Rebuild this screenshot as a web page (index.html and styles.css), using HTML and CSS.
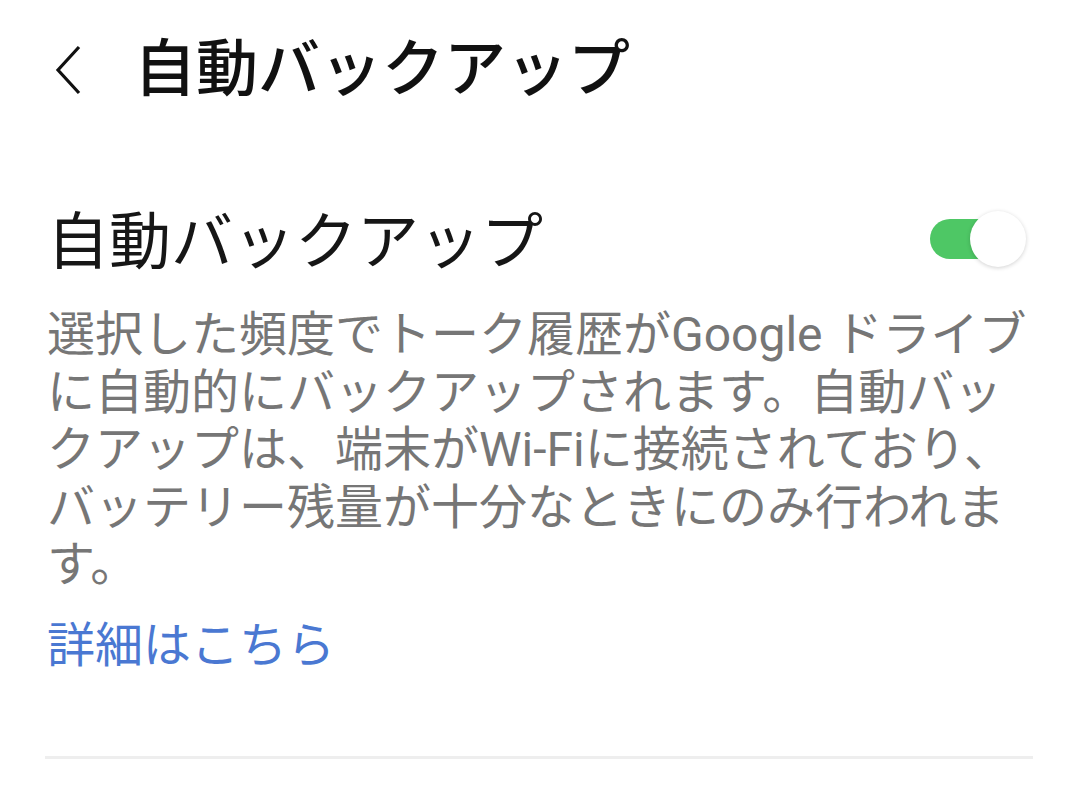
FILE: index.html
```html
<!DOCTYPE html>
<html lang="ja">
<head>
    <meta charset="UTF-8">
    <meta name="viewport" content="width=device-width, initial-scale=1.0">
    <title>自動バックアップ</title>
    <link rel="stylesheet" href="styles.css">
</head>
<body>
    <header class="top-bar">
        <button class="back-button" type="button" aria-label="戻る">
            <svg width="30" height="52" viewBox="0 0 30 52">
                <polyline points="25,3 4,26 25,49" fill="none" stroke="#111" stroke-width="3.2"/>
            </svg>
        </button>
        <h1 class="page-title">自動バックアップ</h1>
    </header>

    <section class="setting">
        <div class="setting-row">
            <h2 class="setting-title">自動バックアップ</h2>
            <div class="switch on">
                <span class="switch-track"></span>
                <span class="switch-knob"></span>
            </div>
        </div>
        <p class="setting-desc">選択した頻度でトーク履歴がGoogle ドライブ<br>に自動的にバックアップされます。自動バッ<br>クアップは、端末がWi-Fiに接続されており、<br>バッテリー残量が十分なときにのみ行われま<br>す。</p>
        <a class="more-link" href="#">詳細はこちら</a>
        <div class="divider"></div>
    </section>
</body>
</html>
```

FILE: styles.css
```css
body {
    margin: 0;
    background: #fff;
    font-family: Roboto, "Noto Sans CJK JP", sans-serif;
    color: #111;
}

.top-bar {
    height: 140px;
    display: flex;
    align-items: center;
    padding-left: 54px;
}

.back-button {
    border: none;
    background: none;
    padding: 0;
    display: flex;
}

.page-title {
    margin: 0 0 0 50px;
    font-size: 62px;
    font-weight: 500;
    line-height: 80px;
}

.setting {
    padding: 0 45px 0 47px;
}

.setting-row {
    margin-top: 63px;
    display: flex;
    align-items: center;
    justify-content: space-between;
}

.setting-title {
    margin: 0;
    font-size: 62px;
    font-weight: normal;
    line-height: 80px;
    color: #161616;
}

.switch {
    position: relative;
    width: 96px;
    height: 56px;
    margin-right: 7px;
    margin-top: -8px;
}

.switch-track {
    position: absolute;
    left: 0;
    top: 8px;
    width: 80px;
    height: 40px;
    border-radius: 20px;
    background: #4ec765;
}

.switch-knob {
    position: absolute;
    right: 0;
    top: 0;
    width: 56px;
    height: 56px;
    border-radius: 50%;
    background: #fff;
    box-shadow: 0 1px 4px rgba(0, 0, 0, 0.18);
}

.setting-desc {
    margin: 23px 0 0;
    font-size: 48px;
    line-height: 57.5px;
    color: #767676;
    white-space: nowrap;
}

.more-link {
    display: block;
    margin-top: 23px;
    font-size: 48px;
    line-height: 57.5px;
    color: #4a78d2;
    text-decoration: none;
}

.divider {
    margin-top: 82px;
    height: 3px;
    background: #eeeeee;
    margin-left: -2px;
}
```
